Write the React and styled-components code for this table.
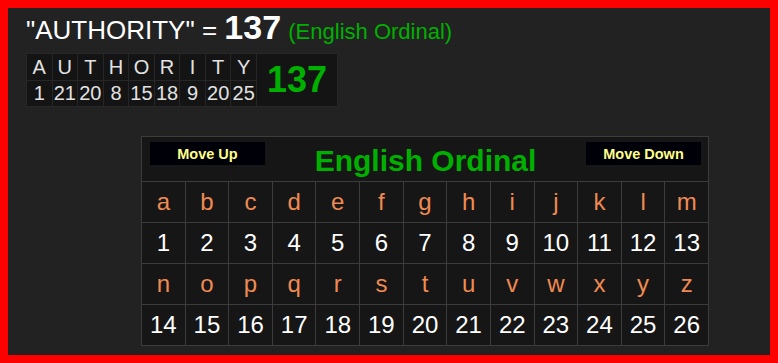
import React from "react";
import styled, { createGlobalStyle } from "styled-components";

const GlobalStyle = createGlobalStyle`
  body {
    margin: 0;
    font-family: "Liberation Sans", Arial, sans-serif;
    background: #222;
  }
`;

const Frame = styled.div`
  box-sizing: border-box;
  width: 778px;
  height: 363px;
  border: 8px solid #ff0000;
  background: #222;
  padding: 3px 0 0 18px;
`;

const Title = styled.div`
  color: #fff;
  font-size: 26px;
  line-height: 32px;
  height: 32px;
  white-space: nowrap;
`;

const TitleValue = styled.span`
  font-size: 34px;
  font-weight: bold;
`;

const TitleCipher = styled.span`
  color: #00b000;
  font-size: 22px;
`;

const WordTable = styled.div`
  display: grid;
  grid-template-columns: repeat(9, 1fr) 80px;
  grid-template-rows: 26px 25px;
  gap: 1px;
  padding: 1px;
  width: 312px;
  box-sizing: border-box;
  margin-top: 10px;
  background: #262626;
`;

const WordCell = styled.div`
  background: #141414;
  color: #e2e2e2;
  font-size: 20px;
  display: flex;
  align-items: center;
  justify-content: center;
`;

const WordTotal = styled.div`
  grid-column: 10;
  grid-row: 1 / span 2;
  background: #141414;
  color: #00b000;
  font-size: 36px;
  font-weight: bold;
  display: flex;
  align-items: center;
  justify-content: center;
`;

const Chart = styled.div`
  display: grid;
  grid-template-columns: repeat(13, 1fr);
  grid-template-rows: 44px repeat(4, 40px);
  gap: 1px;
  padding: 1px;
  box-sizing: border-box;
  width: 568px;
  margin: 29px 0 0 115px;
  background: #3c3c3c;
`;

const ChartHeader = styled.div`
  grid-column: 1 / -1;
  background: #161616;
  display: flex;
  align-items: flex-start;
  justify-content: space-between;
  padding: 5px 7px 0 8px;
`;

const MoveButton = styled.button`
  width: 115px;
  height: 23px;
  background: #000008;
  border: none;
  padding: 0;
  color: #ffff88;
  font-family: "Liberation Sans", Arial, sans-serif;
  font-size: 14.5px;
  font-weight: bold;
  cursor: pointer;
`;

const ChartTitle = styled.div`
  color: #00b000;
  font-size: 30px;
  font-weight: bold;
  line-height: 44px;
  margin-top: -3px;
`;

const ChartCell = styled.div`
  background: #161616;
  color: ${(p) => (p.$letter ? "#ef8a52" : "#ffffff")};
  font-size: 24px;
  display: flex;
  align-items: center;
  justify-content: center;
`;

const word = "AUTHORITY";
const value = (ch) => ch.toLowerCase().charCodeAt(0) - 96;
const alphabet = "abcdefghijklmnopqrstuvwxyz".split("");

export default function App() {
  const rows = [alphabet.slice(0, 13), alphabet.slice(13)];
  return (
    <>
      <GlobalStyle />
      <Frame>
        <Title>
          "AUTHORITY" = <TitleValue>137</TitleValue>{" "}
          <TitleCipher>(English Ordinal)</TitleCipher>
        </Title>
        <WordTable>
          {word.split("").map((ch, i) => (
            <WordCell key={"l" + i} style={{ gridRow: 1, gridColumn: i + 1 }}>
              {ch}
            </WordCell>
          ))}
          {word.split("").map((ch, i) => (
            <WordCell key={"n" + i} style={{ gridRow: 2, gridColumn: i + 1 }}>
              {value(ch)}
            </WordCell>
          ))}
          <WordTotal>137</WordTotal>
        </WordTable>
        <Chart>
          <ChartHeader>
            <MoveButton>Move Up</MoveButton>
            <ChartTitle>English Ordinal</ChartTitle>
            <MoveButton>Move Down</MoveButton>
          </ChartHeader>
          {rows.map((row) => (
            <React.Fragment key={row[0]}>
              {row.map((ch) => (
                <ChartCell key={ch} $letter>
                  {ch}
                </ChartCell>
              ))}
              {row.map((ch) => (
                <ChartCell key={ch + "n"}>{value(ch)}</ChartCell>
              ))}
            </React.Fragment>
          ))}
        </Chart>
      </Frame>
    </>
  );
}
